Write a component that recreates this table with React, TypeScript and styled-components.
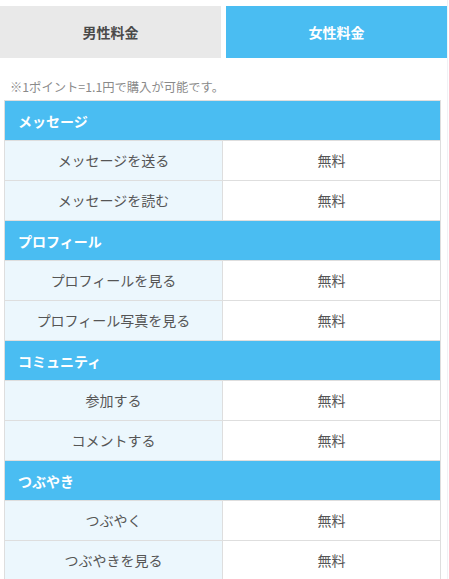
import { Fragment } from 'react'
import styled, { createGlobalStyle } from 'styled-components'

const GlobalStyle = createGlobalStyle`
  body {
    margin: 0;
    background: #fff;
    font-family: "Noto Sans CJK JP", "Noto Sans", sans-serif;
  }
`

const Page = styled.div`
  width: 447px;
  min-height: 579px;
  border-right: 1px solid #f1f1f5;
`
const Tabs = styled.div`
  display: flex;
  gap: 5px;
  padding-top: 6px;
`
const Tab = styled.div<{ $active?: boolean }>`
  flex: 1;
  height: 52px;
  display: flex;
  align-items: center;
  justify-content: center;
  font-size: 14px;
  font-weight: bold;
  background: ${p => (p.$active ? '#4abdf2' : '#e9e9e9')};
  color: ${p => (p.$active ? '#fff' : '#4a4a4a')};
`
const Note = styled.p`
  margin: 0;
  padding: 20px 0 0 10px;
  height: 22px;
  font-size: 12.3px;
  line-height: 18px;
  color: #8a8a8a;
`
const Table = styled.table`
  margin-left: 4px;
  width: 437px;
  border-collapse: collapse;
  border: 1px solid #dedede;
`
const SectionCell = styled.th`
  height: 39px;
  padding: 0 0 0 13px;
  text-align: left;
  font-size: 14px;
  font-weight: bold;
  color: #fff;
  background: #4abdf2;
  border: 1px solid #dedede;
`
const Cell = styled.td<{ $label?: boolean }>`
  height: 37px;
  padding: 0 0 2px;
  width: 50%;
  text-align: center;
  font-size: 14px;
  color: #555;
  background: ${p => (p.$label ? '#ecf7fd' : '#fff')};
  border: 1px solid #dedede;
`

const sections = [
  { title: 'メッセージ', items: ['メッセージを送る', 'メッセージを読む'] },
  { title: 'プロフィール', items: ['プロフィールを見る', 'プロフィール写真を見る'] },
  { title: 'コミュニティ', items: ['参加する', 'コメントする'] },
  { title: 'つぶやき', items: ['つぶやく', 'つぶやきを見る'] },
]

const App: React.FC = () => {
  return (
    <>
      <GlobalStyle />
      <Page>
        <Tabs>
          <Tab>男性料金</Tab>
          <Tab $active>女性料金</Tab>
        </Tabs>
        <Note>※1ポイント=1.1円で購入が可能です。</Note>
        <Table>
          <tbody>
            {sections.map(s => (
              <Fragment key={s.title}>
                <tr>
                  <SectionCell colSpan={2}>{s.title}</SectionCell>
                </tr>
                {s.items.map(item => (
                  <tr key={item}>
                    <Cell $label>{item}</Cell>
                    <Cell>無料</Cell>
                  </tr>
                ))}
              </Fragment>
            ))}
          </tbody>
        </Table>
      </Page>
    </>
  )
}

export default App
